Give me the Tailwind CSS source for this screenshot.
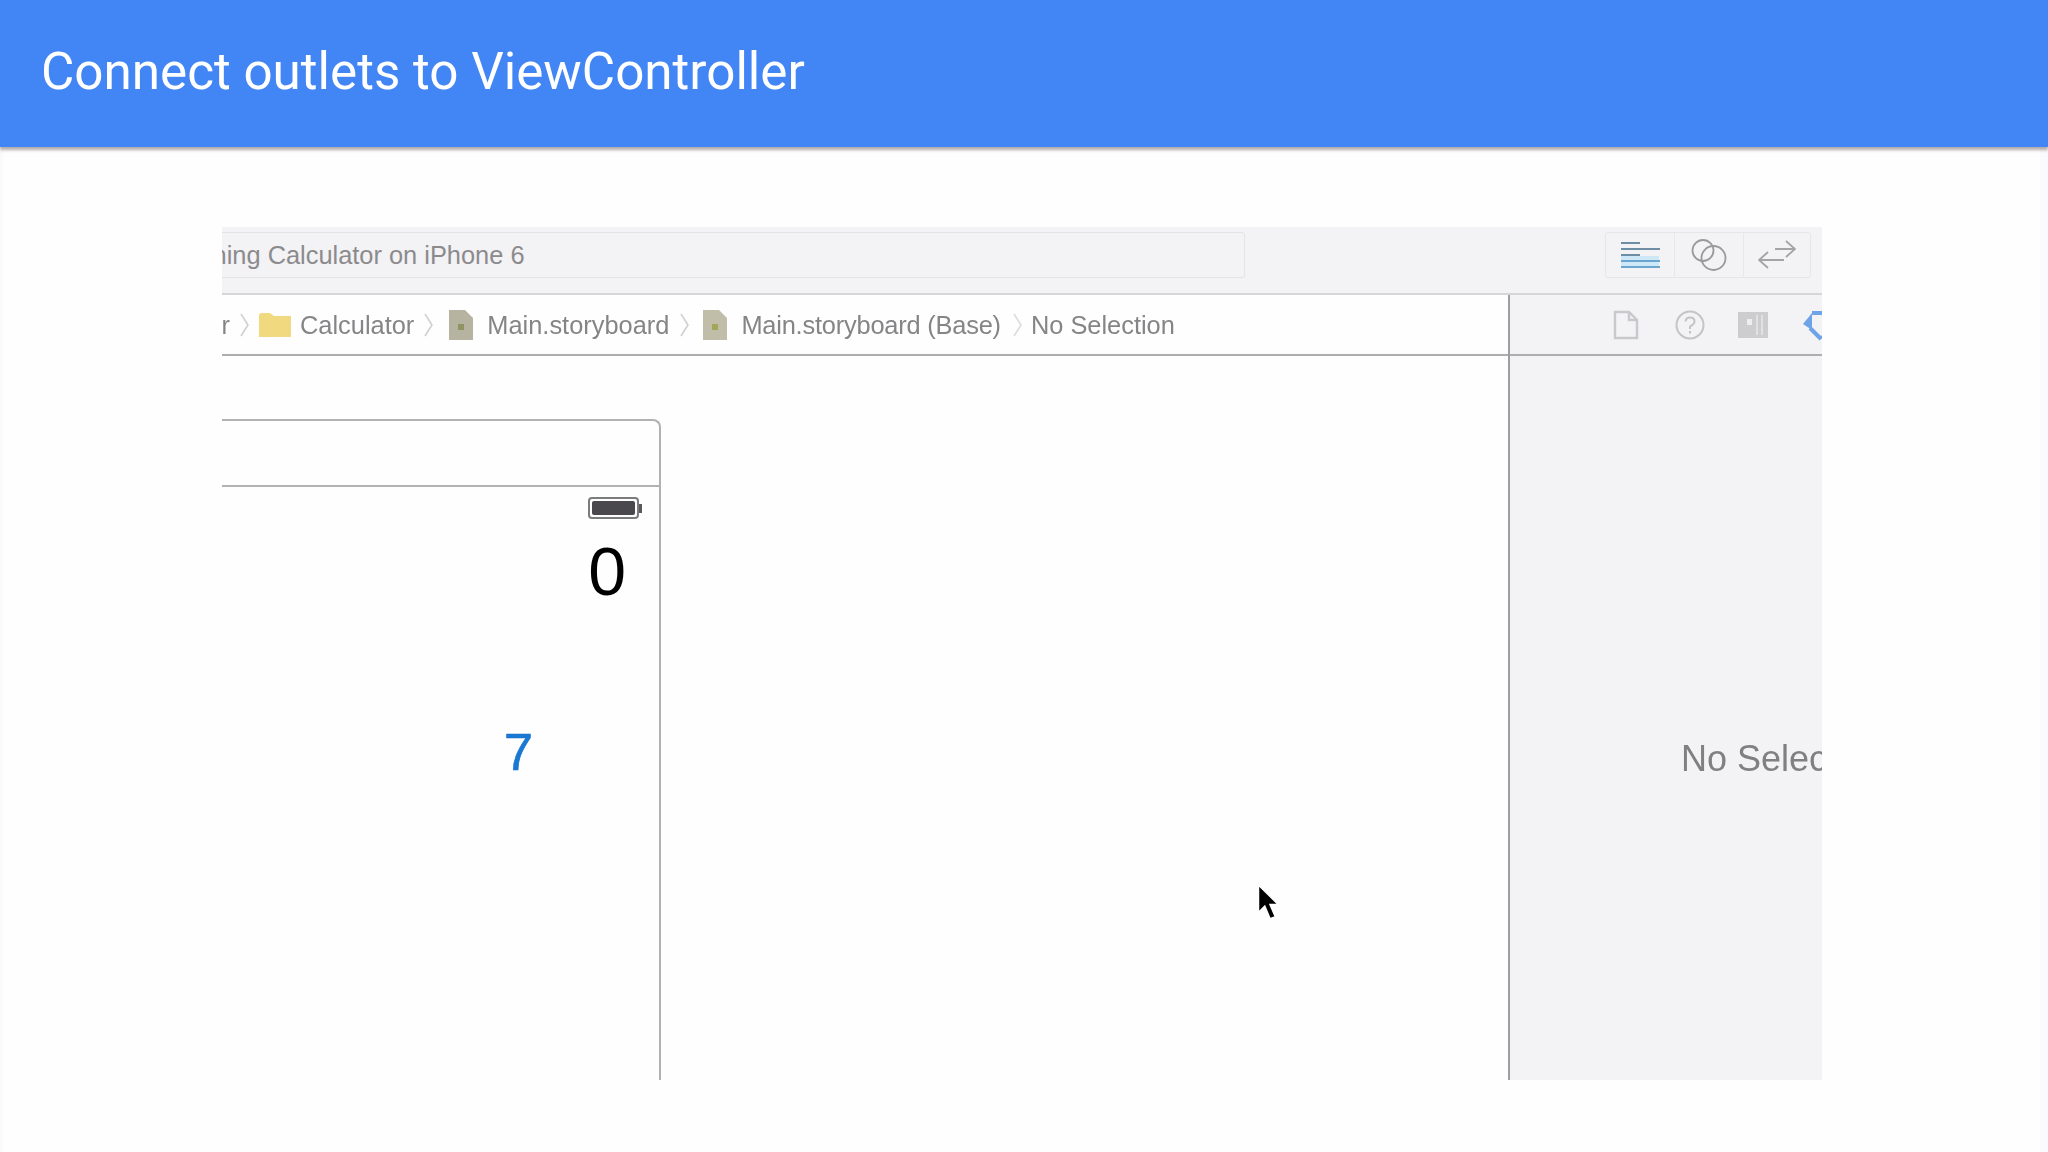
<!DOCTYPE html>
<html lang="en">
<head>
  <meta charset="UTF-8">
  <title>Connect outlets to ViewController</title>
  <script src="https://cdn.jsdelivr.net/npm/@tailwindcss/browser@4"></script>
</head>
<body class="bg-white w-[2048px] h-[1152px] overflow-hidden font-['Roboto',sans-serif]">
  <header class="relative z-10 h-[147px] bg-[#4285f4] flex items-center pl-[41px] pb-[3px] shadow-[0_3px_3px_rgba(90,70,70,0.45)]">
    <h1 class="text-white text-[51.200px] leading-none">Connect outlets to ViewController</h1>
  </header>

  <div class="h-[1005px] bg-[#fefefe] border-l-[3px] border-r-[8px] border-[#faf9fb] pt-[80px] pl-[219px]">
    <!-- video frame -->
    <main class="w-[1600px] h-[853px] flex flex-col overflow-hidden blur-[0.75px] font-['Liberation_Sans',sans-serif]">
      <div class="h-[68px] shrink-0 bg-[#f3f2f5] border-b-2 border-[#d6d5d8] flex items-start justify-between pt-[5px] pr-[11px]">
        <div class="w-[1023px] h-[46px] border border-l-0 border-[#e4e3e6] rounded-r-[3px] flex items-center overflow-hidden">
          <span class="text-[25.400px] text-[#8b8b8d] whitespace-nowrap -ml-[56px]">Running Calculator on iPhone 6</span>
        </div>
        <div class="flex h-[46px] border border-[#e6e5e8] rounded-[3px]">
          <div class="w-[69px] flex items-center justify-center border-r border-[#e8e7ea]">
            <svg width="40" height="28" viewBox="0 0 40 28" fill="none" stroke-width="2">
              <rect x="1" y="15" width="38" height="10" fill="#cfe8f8" stroke="none"/>
              <path d="M1 2H20" stroke="#6f8ea5"/><path d="M1 8H40" stroke="#6f8ea5"/><path d="M1 14H20" stroke="#6f8ea5"/>
              <path d="M1 20H40" stroke="#6aa6cf"/><path d="M1 26H40" stroke="#6aa6cf"/>
            </svg>
          </div>
          <div class="w-[69px] flex items-center justify-center border-r border-[#e8e7ea]">
            <svg width="36" height="32" viewBox="0 0 36 32" fill="none" stroke="#9a9a9c" stroke-width="1.800">
              <circle cx="12" cy="11.500" r="10.500"/><circle cx="22.500" cy="19" r="12"/>
            </svg>
          </div>
          <div class="w-[66px] flex items-center justify-center">
            <svg width="38" height="30" viewBox="0 0 38 30" fill="none" stroke="#a4a4a6" stroke-width="1.800">
              <path d="M17 9H37M28 1L37 9L28 17"/><path d="M26 20H1M10 12L1 20L10 28"/>
            </svg>
          </div>
        </div>
      </div>

      <div class="flex-1 flex min-h-0">
        <!-- editor -->
        <div class="w-[1288px] shrink-0 border-r-2 border-[#9e9ea0] flex flex-col">
          <div class="h-[61px] shrink-0 border-b-2 border-[#adadaf] flex items-center pt-[1px] text-[25.400px] text-[#858587] whitespace-nowrap">
            <span class="w-[8px] overflow-hidden flex justify-end">r</span>
            <svg class="ml-[10px]" width="9" height="24" viewBox="0 0 9 24" fill="none" stroke="#d0d0d2" stroke-width="1.600"><path d="M1 1L8 12L1 23"/></svg>
            <svg class="ml-[9px]" width="34" height="26" viewBox="0 0 34 26"><path d="M1 4Q1 1 4 1H12L16 4H33V25H1Z" fill="#f0d97f"/></svg>
            <span class="ml-[8px]">Calculator</span>
            <svg class="ml-[10px]" width="9" height="24" viewBox="0 0 9 24" fill="none" stroke="#d0d0d2" stroke-width="1.600"><path d="M1 1L8 12L1 23"/></svg>
            <svg class="ml-[15px]" width="26" height="32" viewBox="0 0 26 32"><path d="M1 1H17L25 9V31H1Z" fill="#b6b4a0"/><rect x="10" y="15" width="6" height="6" fill="#8f9560"/></svg>
            <span class="ml-[13px]">Main.storyboard</span>
            <svg class="ml-[11px]" width="9" height="24" viewBox="0 0 9 24" fill="none" stroke="#d0d0d2" stroke-width="1.600"><path d="M1 1L8 12L1 23"/></svg>
            <svg class="ml-[13px]" width="26" height="32" viewBox="0 0 26 32"><path d="M1 1H17L25 9V31H1Z" fill="#c0bea8"/><rect x="10" y="15" width="6" height="6" fill="#a2a656"/></svg>
            <span class="ml-[13px] tracking-[-0.2px]">Main.storyboard (Base)</span>
            <svg class="ml-[12px]" width="9" height="24" viewBox="0 0 9 24" fill="none" stroke="#dcdcde" stroke-width="1.600"><path d="M1 1L8 12L1 23"/></svg>
            <span class="ml-[9px]">No Selection</span>
          </div>

          <!-- storyboard canvas -->
          <div class="flex-1 min-h-0 pt-[63px] relative">
            <div class="w-[439px] h-full border-t-2 border-r-2 border-[#b2b2b4] rounded-tr-[8px] flex flex-col">
              <div class="h-[66px] shrink-0 border-b-2 border-[#b2b2b4]"></div>
              <div class="flex justify-end pr-[17px] pt-[10px]">
                <div class="flex items-center">
                  <div class="w-[51px] h-[22px] rounded-[4px] border-2 border-[#7c7c7e] p-[2px]"><div class="w-full h-full bg-[#4a484c] rounded-[2px]"></div></div>
                  <div class="w-[3px] h-[9px] bg-[#5a5a5c]"></div>
                </div>
              </div>
              <div class="flex justify-end pr-[33px] text-[68px] leading-none text-black mt-[18px]">0</div>
              <div class="flex justify-end pr-[126px] text-[52px] leading-none text-[#1a78d2] [-webkit-text-stroke:0.7px_#1a78d2] mt-[121px]">7</div>
            </div>
            <!-- cursor -->
            <svg class="absolute left-[1034px] top-[528px]" width="26" height="38" viewBox="0 0 24 36">
              <path d="M2 1V27L8 21L13 33L18 31L13 19.500H21Z" fill="#000" stroke="#fff" stroke-width="1.500"/>
            </svg>
          </div>
        </div>

        <!-- inspector -->
        <div class="flex-1 bg-[#f3f2f5] flex flex-col">
          <div class="h-[61px] shrink-0 border-b-2 border-[#adadaf] flex items-center pl-[103px] gap-[34px] overflow-hidden">
            <svg class="shrink-0" width="26" height="30" viewBox="0 0 26 30" fill="none" stroke="#c9c9cb" stroke-width="2.400"><path d="M2 2H16L24 10V28H2Z"/><path d="M16 2V10H24"/></svg>
            <svg class="shrink-0 ml-[2px]" width="30" height="30" viewBox="0 0 30 30" fill="none" stroke="#c4c4c6" stroke-width="2"><circle cx="15" cy="15" r="13.500"/><path d="M10.500 11.500Q11 7.500 15 7.500Q19.500 7.500 19.500 11.500Q19.500 14 15 16.500V19"/><path d="M15 21V23.500"/></svg>
            <svg class="shrink-0 -ml-[1px]" width="30" height="26" viewBox="0 0 30 26"><rect width="30" height="26" fill="#cdcdcf"/><rect x="9" y="7" width="5" height="6" fill="#eeeeee"/><path d="M19 3V23M24 3V23" stroke="#eeeeee" stroke-width="1.200"/></svg>
            <svg class="shrink-0 -ml-[4px]" width="30" height="34" viewBox="0 0 30 34" fill="none" stroke="#6ea3e8" stroke-width="4">
              <path d="M5 16L14 5V22Z" fill="#6ea3e8" stroke="none"/><path d="M14 5H30"/><path d="M12 20L23 31"/><path d="M30 20L24 31"/>
            </svg>
          </div>
          <div class="flex-1 min-h-0 pl-[171px] pt-[385px] text-[36px] leading-none text-[#808082] whitespace-nowrap overflow-hidden">No Selection</div>
        </div>
      </div>
    </main>
  </div>
</body>
</html>
